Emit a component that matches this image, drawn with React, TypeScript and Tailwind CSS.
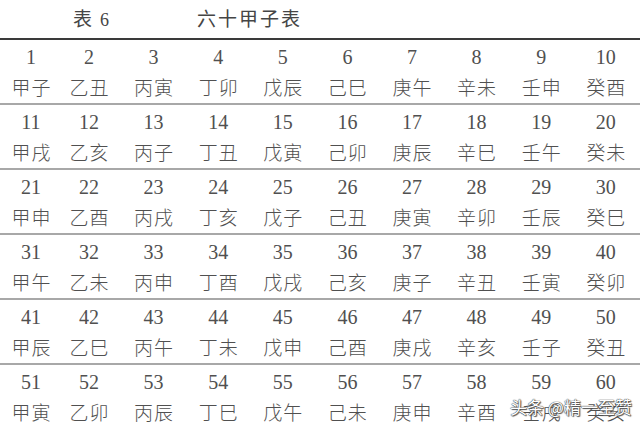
const stems = ['甲', '乙', '丙', '丁', '戊', '己', '庚', '辛', '壬', '癸'];
const branches = ['子', '丑', '寅', '卯', '辰', '巳', '午', '未', '申', '酉', '戌', '亥'];

// 60 pairs, 10 per row
const cycle = Array.from({ length: 60 }, (_, i) => ({
  n: i + 1,
  name: stems[i % 10] + branches[i % 12],
}));

const rows = Array.from({ length: 6 }, (_, r) => cycle.slice(r * 10, r * 10 + 10));

const cjk = "font-['Noto_Sans_CJK_SC',sans-serif]";
const serif = "font-['Liberation_Serif',serif]";

export default function App() {
  return (
    <div className="relative w-[640px] h-[426px] overflow-hidden bg-white text-[#505050]">
      {/* Title */}
      <div className={`flex items-start h-[38px] pt-[4px] text-[19px] text-[#454545] ${cjk}`}>
        <div className="ml-[73px] flex items-baseline">
          <span>表</span>
          <span className={`ml-[8px] text-[18px] ${serif}`}>6</span>
        </div>
        <span className="ml-[88px] tracking-[2px]">六十甲子表</span>
      </div>
      <div className="h-[2px] bg-[#3a3a3a]" />

      {rows.map((row, r) => (
        <div key={r}>
          <div className="grid grid-cols-[58px_repeat(9,64.6px)] pl-[10px] h-[63px] pt-[5px]">
            {row.map((c) => (
              <div key={c.n} className="w-[42px] flex flex-col items-center whitespace-nowrap">
                <div className={`h-[24px] leading-[24px] text-[20px] ${serif}`}>{c.n}</div>
                <div className={`mt-[6px] h-[24px] leading-[24px] text-[19px] tracking-[1px] pl-[1px] font-light ${cjk}`}>
                  {c.name}
                </div>
              </div>
            ))}
          </div>
          {r < 5 && <div className="h-[2px] bg-[#a8a8a8]" />}
        </div>
      ))}

      {/* Watermark */}
      <div
        className={`absolute left-[510px] top-[396px] text-[17px] leading-[22px] text-white whitespace-nowrap ${cjk}`}
        style={{ textShadow: '0 0 1px #333, 0 0 1px #333, 1px 1px 1px #555' }}
      >
        头条 @精一至赞
      </div>
    </div>
  );
}
